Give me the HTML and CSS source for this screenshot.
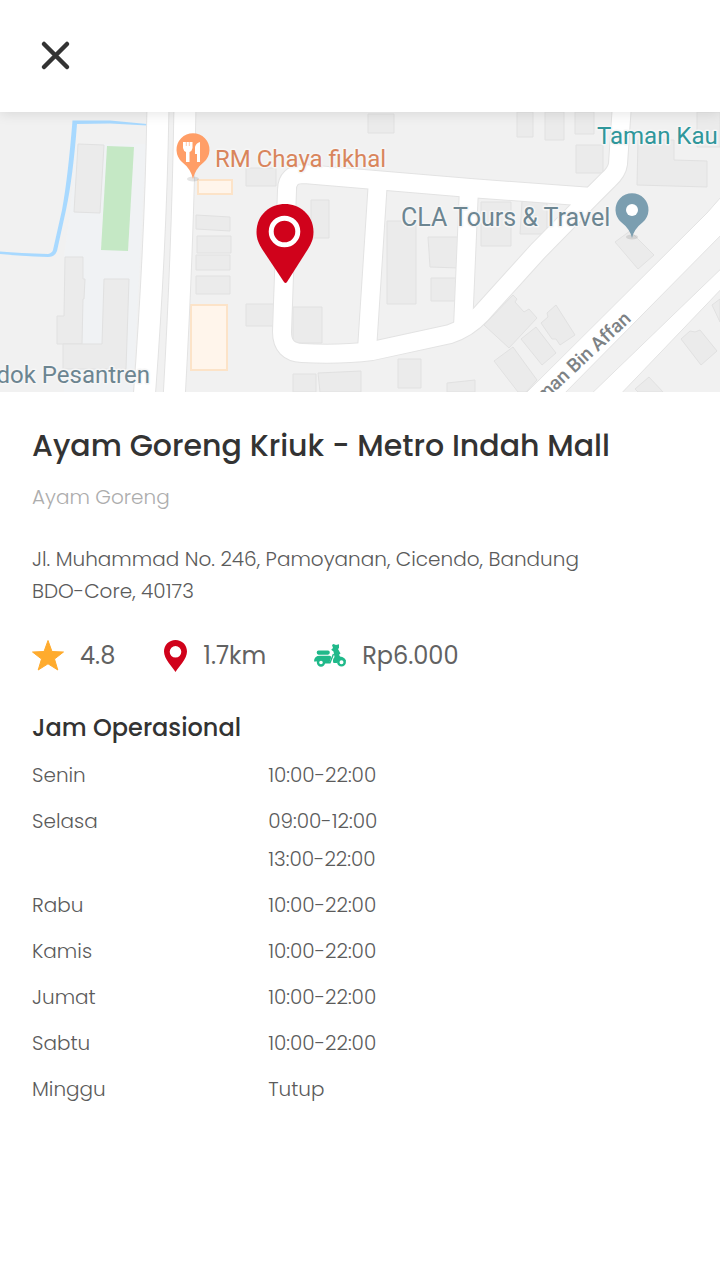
FILE: index.html
```html
<!DOCTYPE html>
<html lang="id">
<head>
<meta charset="utf-8">
<meta name="viewport" content="width=device-width, initial-scale=1">
<title>Ayam Goreng Kriuk - Metro Indah Mall</title>
<link rel="stylesheet" href="styles.css">
</head>
<body>
<header class="topbar">
  <button class="close" type="button" aria-label="Tutup halaman">
    <svg viewBox="0 0 48 48" aria-hidden="true"><path d="M12 12 35 35M35 12 12 35"/></svg>
  </button>
</header>
<main>
  <svg class="map" viewBox="0 0 720 280" preserveAspectRatio="xMidYMid slice" role="img" aria-label="Peta lokasi">
    <rect class="land" width="720" height="280"/>
    <path class="campus" d="M76 32 146 32 133 280 64 280 64 145 70 100Z"/>
    <path class="water" d="M147 13.500 110 11.500 77 12Q73 65 66 98L57 139Q55 145 48 145Q20 144 0 142V139.500Q20 141 48 142Q52 141 53 138L62 98Q68 65 72.500 8.500L110 8.500 147 12Z"/>
    <path class="park" d="M107 34 134 35 128 139 101 138Z"/>
    <g class="building">
      <path d="M78 32 104 33 100 101 74 100Z"/>
      <path d="M65 145H83V167L85 167 84 187H83L82 232H57V204H64Z"/>
      <path d="M104 167 129 167 126 257H63V232H102Z"/>
      <path d="M246 56H276V74H246Z"/>
      <path d="M196 103 230 105V119L196 117ZM197 124H231V141H197ZM196 143H230V158H196ZM196 164H230V182H196Z"/>
      <path d="M368 2H394V21H368ZM311 88H329V126H311ZM246 192H274V214H246ZM293 195H322V231H293Z"/>
      <path d="M293 262H316V280H293ZM318 261 361 259V280H320ZM398 247H421V276H398ZM447 271 475 268V280H447Z"/>
      <path d="M387 109H416V192H387ZM428 125H459V156L430 155ZM431 166H458V189H431ZM481 90H511V134H481ZM522 89 547 91V122L520 122Z"/>
      <path d="M517 0H533V25H517ZM545 0H564V28H545ZM575 0H594V22H575ZM576 33H603V61H576Z"/>
      <path d="M638 28H674V48L707 49V75L637 73ZM697 0V35H720V0Z"/>
      <path d="M615 130 630 119 654 143 638 157Z"/>
      <path d="M484 213 513 183 517 187 515 190 524 200 529 197 537 206 509 236Z"/>
      <path d="M521 227 536 215 556 241 542 253ZM494 249 513 235 537 268 526 280H518Z"/>
      <path d="M541 211 548 205 547 201 556 193 575 223 560 233 556 227 552 227Z"/>
      <path d="M681 227 690 219 695 220 700 218 717 239 701 253ZM712 193 720 187V210ZM635 277 649 265 663 280H638Z"/>
    </g>
    <g class="shop">
      <path d="M198 68H232V82H198ZM191 193H227V258H191Z"/>
    </g>
    <g class="road-edge">
      <path d="M158 -8Q156 130 144 288M185 -8Q183 130 174 288" stroke-width="23"/>
      <path d="M622 -8 618 52Q617 60 608 68L592 84L538 139 481 202Q468 216 450 222L372 239Q340 243 302 241Q282 240 282 220L287 78Q287 62 304 62L470 76 592 85"/>
      <path d="M378 68 367 238M469 76 463 216"/>
    </g>
    <path class="avenue" d="M519 288 707 101 728 77V116L558 288ZM585 288 728 150V170L615 288Z"/>
    <g class="road">
      <path d="M158 -8Q156 130 144 288M185 -8Q183 130 174 288" stroke-width="21"/>
      <path d="M622 -8 618 52Q617 60 608 68L592 84L538 139 481 202Q468 216 450 222L372 239Q340 243 302 241Q282 240 282 220L287 78Q287 62 304 62L470 76 592 85"/>
      <path d="M378 68 367 238M469 76 463 216"/>
    </g>
    <ellipse class="pin-shadow" cx="193" cy="67" rx="6" ry="2.500"/>
    <path class="pin-food" d="M193 67Q191 57 182 50A16.500 16.500 0 1 1 204 50Q195 57 193 67Z"/>
    <path class="white" d="M183 30H192.500V36Q192 39 189.500 40V50H186V40Q183.500 39 183 36ZM200 30V50H197V42H195V35Q196 31 200 30Z"/>
    <path class="tines" d="M186.300 30V34M189.300 30V34"/>
    <ellipse class="pin-shadow" cx="632" cy="125" rx="6" ry="2.500"/>
    <path class="pin-travel" d="M632 126Q630 117 621 110A16.500 16.500 0 1 1 643 110Q634 117 632 126Z"/>
    <circle class="white" cx="632" cy="98" r="6"/>
    <g class="label">
      <text class="food" x="215" y="55">RM Chaya fikhal</text>
      <text class="place wide" x="401" y="114">CLA Tours &amp; Travel</text>
      <text class="garden" x="597" y="32">Taman Kau</text>
      <text class="place" x="150" y="271" text-anchor="end">dok Pesantren</text>
      <text class="street" transform="translate(632 208) rotate(-43)" text-anchor="end">man Bin Affan</text>
    </g>
    <path class="marker" d="M285 92C298.500 92 313.500 102 313.500 120C313.500 127 311 132 308 137L287 170Q285.500 172 284 170L262 137C259 132 256.500 127 256.500 120C256.500 102 271 92 285 92Z"/>
    <circle class="marker-ring" cx="284.500" cy="119.500" r="13.300"/>
  </svg>
  <article class="details">
    <h1>Ayam Goreng Kriuk - Metro Indah Mall</h1>
    <p class="category">Ayam Goreng</p>
    <address>Jl. Muhammad No. 246, Pamoyanan, Cicendo, Bandung<br>BDO-Core, 40173</address>
    <ul class="stats">
      <li>
        <svg class="star" viewBox="0 0 32 32" aria-hidden="true"><path d="M16 .5 20 11.500 31.500 12 22.500 19 25.800 30 16 23.800 6.200 30 9.500 19 .5 12 12 11.500Z"/></svg>
        <span>4.8</span>
      </li>
      <li>
        <svg class="pin" viewBox="0 0 24 32" aria-hidden="true"><path fill-rule="evenodd" d="M12.500 0C19 0 24 5 24 11.500C24 19 15.500 27 12.500 32C9.500 27 1 19 1 11.500C1 5 6 0 12.500 0ZM12.500 6A5.800 5.800 0 1 0 12.500 17.600A5.800 5.800 0 1 0 12.500 6Z"/></svg>
        <span>1.7km</span>
      </li>
      <li>
        <svg class="scooter" viewBox="0 0 32 32" aria-hidden="true">
          <path d="M4.500 10.500H14Q15.800 10.500 15.800 12.600T14 14.700H4.500Q2.700 14.700 2.700 12.600T4.500 10.500Z"/>
          <path d="M0 21.500Q0 15.700 6 15.700H15.500Q17.500 15.700 17 18L15.500 22.500H11.500L7 20 2.500 21.500Z"/>
          <path d="M18 5 19.500 4 22 5 25 4.300V8L24 9 26.500 13.500 25 14.800 26 16.500Q31 17 32 21L31 22 27 19 23 23H19.500Q18 20 20.500 17L19.500 11.500 17.200 9.800 19 8Z"/>
          <path class="floor" d="M11 22.700H16L19.500 14"/>
          <circle class="wheel" cx="7" cy="22.500" r="3"/>
          <circle class="wheel" cx="27.500" cy="22.200" r="3.200"/>
        </svg>
        <span>Rp6.000</span>
      </li>
    </ul>
    <h2 id="hours">Jam Operasional</h2>
    <table aria-labelledby="hours">
      <tbody>
        <tr><th scope="row">Senin</th><td>10:00-22:00</td></tr>
        <tr><th scope="row">Selasa</th><td>09:00-12:00<br>13:00-22:00</td></tr>
        <tr><th scope="row">Rabu</th><td>10:00-22:00</td></tr>
        <tr><th scope="row">Kamis</th><td>10:00-22:00</td></tr>
        <tr><th scope="row">Jumat</th><td>10:00-22:00</td></tr>
        <tr><th scope="row">Sabtu</th><td>10:00-22:00</td></tr>
        <tr><th scope="row">Minggu</th><td>Tutup</td></tr>
      </tbody>
    </table>
  </article>
</main>
</body>
</html>
```
FILE: styles.css
```css
* { box-sizing: border-box; }
body {
  margin: 0;
  background: #fff;
  color: #5b5b5b;
  font-family: Poppins, Inter, "Liberation Sans", sans-serif;
  font-size: 20px;
  font-weight: 300;
}
.topbar {
  position: relative;
  display: flex;
  align-items: center;
  padding: 32px;
  background: #fff;
  box-shadow: 0 2px 12px rgba(0, 0, 0, .1);
}
.close {
  width: 48px;
  height: 48px;
  padding: 0;
  border: 0;
  background: none;
  cursor: pointer;
}
.close svg { display: block; width: 100%; }
.close path { fill: none; stroke: #333; stroke-width: 4.5; stroke-linecap: round; }

.map { display: block; width: 100%; height: 280px; }
.land { fill: #f1f1f1; }
.campus { fill: #f0f2f4; }
.water { fill: #a8d9ff; }
.park { fill: #c5e8c5; }
.building { fill: #ebebeb; stroke: #e1e1e1; }
.shop { fill: #fff5eb; stroke: #fce3c8; stroke-width: 2; }
.road-edge { fill: none; stroke: #e3e3e3; stroke-width: 20; }
.road { fill: none; stroke: #fff; stroke-width: 18; }
.avenue { fill: #fff; stroke: #e3e3e3; }
.white { fill: #fff; }
.tines { stroke: #ffc9aa; }
.pin-shadow { fill: #000; opacity: .1; }
.pin-food { fill: #ff9e67; }
.pin-travel { fill: #7b9eb0; }
.label {
  font-family: Roboto, sans-serif;
  font-size: 24px;
  font-weight: 400;
  stroke: #f6f6f6;
  stroke-width: 3;
  stroke-linejoin: round;
  paint-order: stroke;
}
.food { fill: #d9855c; }
.place { fill: #6c8591; }
.wide { font-size: 25px; }
.garden { fill: #2f979b; }
.street { fill: #7d8285; font-size: 19px; font-weight: 500; stroke: #fff; }
.marker { fill: #d0021b; }
.marker-ring { fill: none; stroke: #fff; stroke-width: 5; }

.details { padding: 32px; }
h1, h2, p, address, ul { margin: 0; }
h1 { color: #333; font-size: 30px; font-weight: 500; line-height: 44px; }
.category { margin-top: 13px; color: #adadad; line-height: 32px; }
address { margin-top: 30px; font-style: normal; line-height: 32px; }
.stats {
  display: flex;
  flex-wrap: wrap;
  gap: 16px 48px;
  margin-top: 31px;
  padding: 0;
  list-style: none;
  color: #626262;
  font-size: 24px;
  font-weight: 400;
  line-height: 36px;
}
.stats li { display: flex; align-items: center; gap: 16px; }
.stats svg { width: 32px; height: 32px; }
.stats .pin { width: 24px; fill: #d0021b; }
.star { fill: #ffab2d; stroke: #ffab2d; stroke-width: 1; stroke-linejoin: round; }
.scooter { fill: #20b98a; }
.wheel { fill: #fff; stroke: #20b98a; stroke-width: 2.4; }
.floor { fill: none; stroke: #20b98a; stroke-width: 1.4; }
h2 { margin-top: 36px; color: #333; font-size: 24px; font-weight: 500; line-height: 36px; }
table { width: 100%; margin-top: 10px; border-collapse: collapse; line-height: 38px; }
th, td { padding: 0 0 8px; text-align: left; vertical-align: top; font-weight: 300; }
th { width: 36%; }
```
